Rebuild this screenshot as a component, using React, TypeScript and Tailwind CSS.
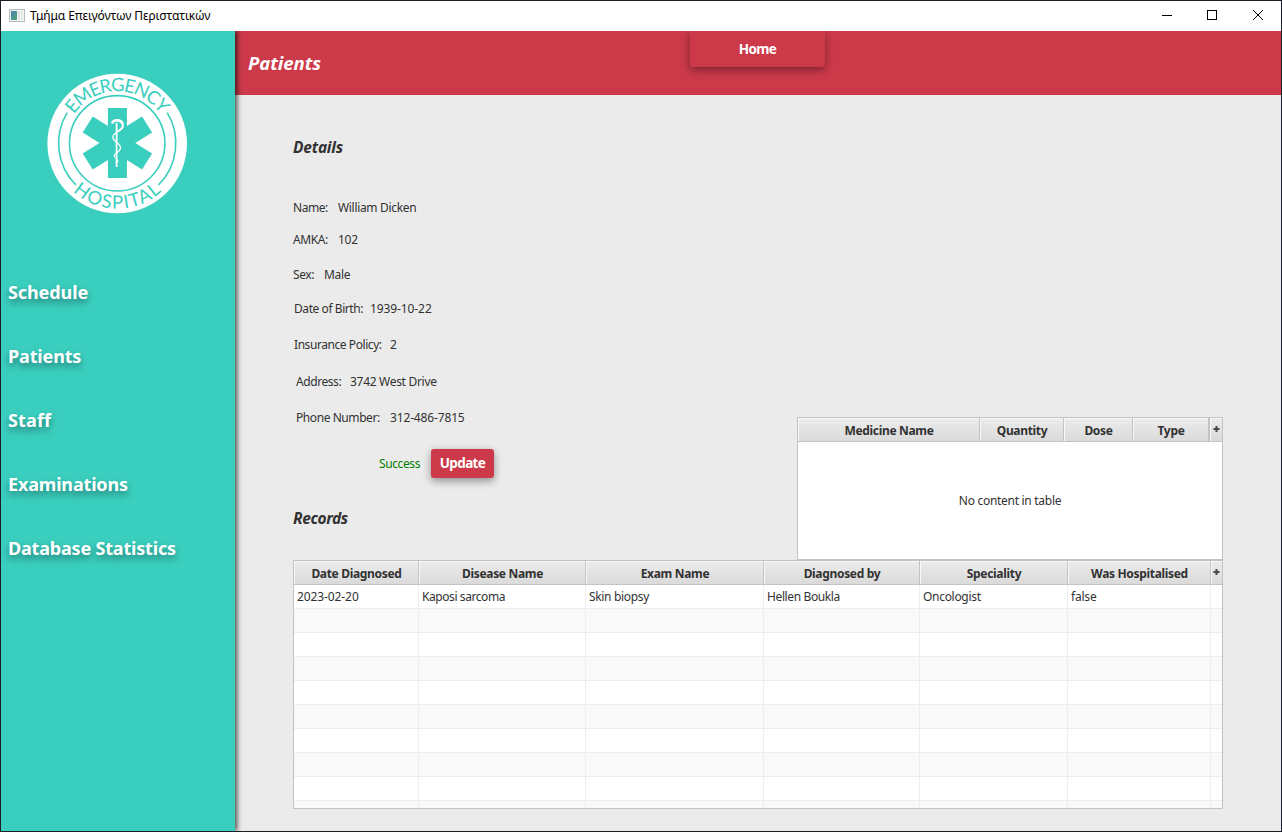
import React from "react";

const navItems = [
  { label: "Schedule", spacing: "tracking-[-0.1px]" },
  { label: "Patients", spacing: "tracking-[-0.15px]" },
  { label: "Staff", spacing: "tracking-[0.15px]" },
  { label: "Examinations", spacing: "tracking-[-0.17px]" },
  { label: "Database Statistics", spacing: "tracking-[-0.19px]" },
];

const details = [
  { label: "Name:", value: "William Dicken", row: "mt-[43px]", labelBox: "w-[45px]", spacing: "tracking-[-0.32px]" },
  { label: "AMKA:", value: "102", row: "mt-[16px]", labelBox: "w-[45px]", spacing: "tracking-[-0.3px]" },
  { label: "Sex:", value: "Male", row: "mt-[19px]", labelBox: "w-[31px]", spacing: "tracking-[-0.35px]" },
  { label: "Date of Birth:", value: "1939-10-22", row: "mt-[18px] pl-px", labelBox: "w-[76px]", spacing: "tracking-[-0.1px]" },
  { label: "Insurance Policy:", value: "2", row: "mt-[20px] pl-px", labelBox: "w-[96px]", spacing: "tracking-[-0.2px]" },
  { label: "Address:", value: "3742 West Drive", row: "mt-[21px] pl-[3px]", labelBox: "w-[54px]", spacing: "tracking-[-0.3px]" },
  { label: "Phone Number:", value: "312-486-7815", row: "mt-[20px] pl-[3px]", labelBox: "w-[94px]", spacing: "tracking-[-0.15px]" },
];

const recordColumns = [
  { title: "Date Diagnosed", width: "w-[125px]", value: "2023-02-20", spacing: "tracking-[-0.1px]" },
  { title: "Disease Name", width: "w-[167px]", value: "Kaposi sarcoma", spacing: "tracking-[-0.42px]" },
  { title: "Exam Name", width: "w-[178px]", value: "Skin biopsy", spacing: "tracking-[-0.33px]" },
  { title: "Diagnosed by", width: "w-[156px]", value: "Hellen Boukla", spacing: "tracking-[-0.38px]" },
  { title: "Speciality", width: "w-[148px]", value: "Oncologist", spacing: "tracking-[-0.3px]" },
  { title: "Was Hospitalised", width: "w-[143px]", value: "false", spacing: "tracking-[-0.2px]" },
];

const medicineColumns = [
  { title: "Medicine Name", width: "w-[182px]" },
  { title: "Quantity", width: "w-[84px]" },
  { title: "Dose", width: "w-[69px]" },
  { title: "Type", width: "w-[76px]" },
];

function Logo() {
  return (
    <svg className="mt-[42px] ml-[46px] h-[141px] w-[141px] shrink-0" viewBox="0 0 141 141">
      <circle cx="70.2" cy="70.5" r="69.8" fill="#fff" />
      <circle cx="70.2" cy="70.3" r="47.7" fill="none" stroke="#3acebe" strokeWidth="1.6" />
      <path d="M20.2 39.7 A58.7 58.7 0 0 0 29 112 M120.2 39.7 A58.7 58.7 0 0 1 111.4 112" fill="none" stroke="#3acebe" strokeWidth="1.6" />
      <defs>
        <path id="top-arc" d="M18.2 70.2 A52 52 0 0 1 122.2 70.2" />
        <path id="bottom-arc" d="M4.7 70.2 A65.5 65.5 0 0 0 135.7 70.2" />
      </defs>
      <g fill="#3acebe" fontFamily="Lato, sans-serif" fontSize="18.5" textAnchor="middle">
        <text textLength="102"><textPath href="#top-arc" startOffset="50%" textLength="102">EMERGENCY</textPath></text>
        <text textLength="97"><textPath href="#bottom-arc" startOffset="50%" textLength="97">HOSPITAL</textPath></text>
      </g>
      <g fill="#3acebe">
        <rect x="60.9" y="35" width="19" height="70" />
        <rect x="60.9" y="35" width="19" height="70" transform="rotate(58 70.4 70)" />
        <rect x="60.9" y="35" width="19" height="70" transform="rotate(-58 70.4 70)" />
      </g>
      <g stroke="#fff" fill="none" strokeLinecap="round">
        <path d="M69.6 50 V94" strokeWidth="1.8" strokeLinecap="butt" />
        <path d="M65.5 49.5 C67 46.5 74 46.5 75.5 50.5" strokeWidth="2.6" />
        <path d="M75.5 50.5 C77 55 73.5 57 70 59" strokeWidth="2" />
        <path d="M70 59 C65 62 65 65 67.5 67.5 C70 70 74 71.5 73.5 75.5 C73 79 67.5 79.5 67.3 83" strokeWidth="1.3" />
        <path d="M67.3 83 C67.3 86 71.5 85.5 71 89" strokeWidth="1" />
      </g>
    </svg>
  );
}

function ColumnMenu({ width }: { width: string }) {
  return (
    <div className={`${width} h-full bg-linear-to-b from-[#ececec] to-[#dadada] shadow-[inset_1px_1px_0_#f8f8f8]`}>
      <svg className="mx-auto mt-[7px] h-[8px] w-[7px]" viewBox="0 0 7 8">
        <path d="M3.5 1 V7 M0.5 4 H6.5" stroke="#4a4a4a" strokeWidth="2" />
      </svg>
    </div>
  );
}

function HeaderCell({ title, width }: { title: string; width: string }) {
  return (
    <div className={`${width} flex h-full shrink-0 items-center justify-center border-r border-[#c3c3c3] bg-linear-to-b from-[#ececec] to-[#dadada] pt-[3px] pl-px text-[12px] font-bold tracking-[-0.32px] shadow-[inset_1px_1px_0_#f8f8f8]`}>
      {title}
    </div>
  );
}

function MedicineTable() {
  return (
    <div className="mt-[322px] flex h-[143px] w-[426px] shrink-0 flex-col border border-[#c3c3c3] bg-white">
      <div className="flex h-[24px] shrink-0 border-b border-[#c3c3c3]">
        {medicineColumns.map((c) => <HeaderCell key={c.title} title={c.title} width={c.width} />)}
        <div className="w-px bg-[#c3c3c3]" />
        <ColumnMenu width="w-[12px]" />
      </div>
      <div className="flex flex-1 items-center justify-center text-[12px] tracking-[-0.29px]">No content in table</div>
    </div>
  );
}

function RecordsTable() {
  return (
    <div className="ml-[58px] flex h-[249px] w-[930px] shrink-0 flex-col overflow-hidden border border-[#c3c3c3] bg-white">
      <div className="flex h-[24px] shrink-0 border-b border-[#c3c3c3]">
        {recordColumns.map((c) => <HeaderCell key={c.title} title={c.title} width={c.width} />)}
        <ColumnMenu width="w-[11px]" />
      </div>
      {Array.from({ length: 10 }, (_, row) => (
        <div key={row} className={`flex h-[24px] shrink-0 border-b border-[#ededed] ${row % 2 ? "bg-[#f9f9f9]" : "bg-white"}`}>
          {recordColumns.map((c) => (
            <div key={c.title} className={`${c.width} ${c.spacing} flex h-full shrink-0 items-center border-r border-[#ededed] pl-[3px] text-[12px]`}>
              {row === 0 ? c.value : ""}
            </div>
          ))}
        </div>
      ))}
    </div>
  );
}

function TitleBar() {
  return (
    <div className="flex h-[30px] shrink-0 items-center bg-white text-black">
      <svg className="ml-[8px] h-[14px] w-[16px]" viewBox="0 0 16 14">
        <defs>
          <linearGradient id="pane" x1="0" y1="0" x2="1" y2="1">
            <stop offset="0" stopColor="#4a7fb0" />
            <stop offset="1" stopColor="#55a878" />
          </linearGradient>
        </defs>
        <rect x="0.5" y="0.5" width="15" height="12" fill="#f4f4f4" stroke="#b4b9be" />
        <rect x="2" y="2" width="6" height="9" fill="url(#pane)" />
        <rect x="9" y="2" width="2" height="9" fill="#dfe3e6" />
        <rect x="12" y="2" width="2" height="9" fill="#e3ece3" />
      </svg>
      <div className="ml-[5px] text-[12px] tracking-[-0.12px]">Τμήμα Επειγόντων Περιστατικών</div>
      <svg className="ml-auto h-[30px] w-[120px]" viewBox="0 0 120 30" shapeRendering="crispEdges">
        <path d="M1 14.5 H11" stroke="#000" />
        <rect x="46.5" y="9.5" width="9" height="9" fill="none" stroke="#000" />
        <path d="M92 9 L102 19 M102 9 L92 19" stroke="#000" shapeRendering="auto" />
      </svg>
    </div>
  );
}

export default function App() {
  return (
    <div className="flex h-[832px] w-[1282px] flex-col overflow-hidden border border-[#1b1f29] bg-[#ebebeb] font-['Noto_Sans','Open_Sans',sans-serif] whitespace-nowrap text-[#323232]">
      <TitleBar />
      <div className="flex min-h-0 flex-1 overflow-hidden">
        <aside className="relative z-10 flex w-[234px] shrink-0 flex-col bg-[#3acebe] shadow-[2px_0_5px_rgba(0,0,0,0.7)]">
          <Logo />
          <nav className="mt-[64px] flex flex-col gap-[36px] pl-[7px] text-[18px] leading-[28px] font-bold text-white [text-shadow:0_4px_7px_rgba(0,0,0,0.4)]">
            {navItems.map((n) => <a key={n.label} className={n.spacing}>{n.label}</a>)}
          </nav>
        </aside>
        <main className="flex min-w-0 flex-1 flex-col">
          <header className="flex h-[64px] shrink-0 items-start overflow-hidden bg-[#cc3a4a] text-white">
            <h1 className="mt-[20px] w-[455px] pl-[13px] text-[18.5px] leading-[24px] font-bold italic tracking-[-0.03px]">Patients</h1>
            <button className="h-[36px] w-[135px] rounded-b-[3px] bg-[#cc3a4a] pt-px text-[13.5px] font-bold tracking-[-0.65px] shadow-[0_3px_8px_rgba(0,0,0,0.4)]">Home</button>
          </header>
          <div className="flex h-[465px] shrink-0">
            <section className="w-[562px] shrink-0 pl-[58px] text-[12px]">
              <h2 className="mt-[42px] text-[15.5px] leading-[20px] font-bold italic tracking-[-0.2px]">Details</h2>
              {details.map((d) => (
                <div key={d.label} className={`flex h-[16px] leading-[16px] ${d.row}`}>
                  <span className={`${d.labelBox} tracking-[-0.43px]`}>{d.label}</span>
                  <span className={d.spacing}>{d.value}</span>
                </div>
              ))}
              <div className="mt-[23px] flex h-[29px] items-center pl-[86px]">
                <span className="w-[52px] tracking-[-0.4px] text-[#008000]">Success</span>
                <button className="h-[29px] w-[63px] rounded-[3px] bg-[#cc3a4a] text-[13.5px] font-bold tracking-[-0.6px] text-white shadow-[0_3px_8px_rgba(0,0,0,0.4)]">Update</button>
              </div>
              <h2 className="mt-[30px] text-[15.5px] leading-[20px] font-bold italic tracking-[-0.42px]">Records</h2>
            </section>
            <MedicineTable />
          </div>
          <RecordsTable />
        </main>
      </div>
    </div>
  );
}
